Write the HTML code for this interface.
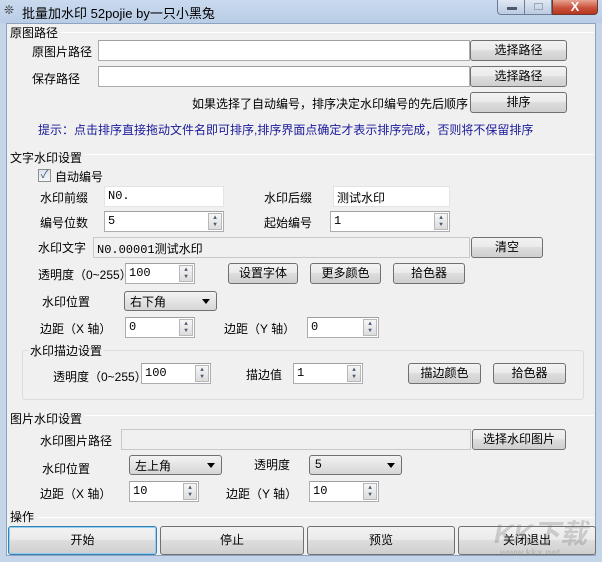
<!DOCTYPE html>
<html><head><meta charset="utf-8"><style>
*{box-sizing:border-box;margin:0;padding:0}
body{width:602px;height:562px;overflow:hidden;background:#c4d5ea;font-family:"Liberation Sans","Noto Sans CJK SC",sans-serif;font-size:12px;color:#000;position:relative}
.a{position:absolute;white-space:nowrap}
#title{left:0;top:0;width:602px;height:23px;background:linear-gradient(#c9daee,#b9cde6)}
#client{left:6px;top:23px;width:590px;height:533px;background:#f0f0f0;border:1px solid #8ea3bf}
.in{position:absolute;background:#fff;border:1px solid #abadb3;border-top-color:#a0a0a0;height:21px;font-size:12px;padding:2px 3px;font-family:"Liberation Mono","Noto Sans CJK SC",monospace}
.gr{background:#f0f0f0;border:1px solid #c8c8c8}
.btn{position:absolute;border:1px solid #707070;border-radius:3px;background:linear-gradient(#f2f2f2 0%,#ebebeb 45%,#dddddd 50%,#cfcfcf 100%);text-align:center;font-size:12px;line-height:19px;height:21px;font-weight:normal}
.sp{position:absolute;right:1px;top:1px;width:14px;height:17px;border:1px solid #b8b8b8;background:linear-gradient(#f6f6f6,#dcdcdc);font-size:6px;line-height:7px;text-align:center;color:#4a5a70}
.sel{position:absolute;border:1px solid #707070;border-radius:3px;height:20px;padding:1px 5px;background:linear-gradient(#f3f3f3,#e4e4e4 50%,#d6d6d6)}
.sel:after{content:"";position:absolute;right:6px;top:7px;border-left:4px solid transparent;border-right:4px solid transparent;border-top:5px solid #000}
.hl{position:absolute;height:1px;background:#dcdcdc;border-bottom:1px solid #fff}
</style></head><body>
<div id="title" class="a"></div>
<div class="a" style="left:4px;top:3px;font-size:12px;color:#333">❊</div>
<div class="a" style="left:22px;top:3px;font-size:13px">批量加水印 52pojie by一只小黑兔</div>
<div class="a" style="left:497px;top:0;width:28px;height:15px;border:1px solid #6d7d95;border-top:none;border-radius:0 0 0 4px;background:linear-gradient(#dfe8f3,#bccbe0)"><div style="position:absolute;left:9px;top:7px;width:10px;height:3px;background:#4b5a72"></div></div>
<div class="a" style="left:525px;top:0;width:27px;height:15px;border:1px solid #6d7d95;border-top:none;border-left:none;background:linear-gradient(#dfe8f3,#bccbe0)"><div style="position:absolute;left:9px;top:3px;width:9px;height:7px;border:1px solid #9aa8bb"></div></div>
<div class="a" style="left:552px;top:0;width:46px;height:15px;border:1px solid #6d3a32;border-top:none;border-radius:0 0 4px 0;background:linear-gradient(#e8a493,#c9533c 55%,#b8361e);color:#fff;font-weight:bold;text-align:center;font-size:13px;line-height:13px">X</div>
<div id="client" class="a"></div>

<div class="hl" style="left:8px;top:32px;width:586px"></div>
<div class="a" style="left:10px;top:24px;background:#f0f0f0;padding-right:2px">原图路径</div>
<div class="a" style="left:32px;top:43px">原图片路径</div>
<div class="in" style="left:98px;top:40px;width:372px"></div>
<div class="btn" style="left:470px;top:40px;width:97px">选择路径</div>
<div class="a" style="left:32px;top:70px">保存路径</div>
<div class="in" style="left:98px;top:66px;width:372px"></div>
<div class="btn" style="left:470px;top:66px;width:97px">选择路径</div>
<div class="a" style="left:192px;top:95px">如果选择了自动编号，排序决定水印编号的先后顺序</div>
<div class="btn" style="left:470px;top:92px;width:97px">排序</div>
<div class="a" style="left:38px;top:121px;color:#1a1a9a">提示：点击排序直接拖动文件名即可排序,排序界面点确定才表示排序完成，否则将不保留排序</div>

<div class="hl" style="left:8px;top:154px;width:586px"></div>
<div class="a" style="left:10px;top:149px;background:#f0f0f0;padding-right:2px">文字水印设置</div>
<div class="a" style="left:38px;top:169px;width:13px;height:13px;border:1px solid #8f8f8f;background:linear-gradient(#dde3ea,#f6f6f6);font-size:11px;line-height:11px;text-align:center;color:#3d5a8a">✓</div>
<div class="a" style="left:55px;top:168px">自动编号</div>
<div class="a" style="left:40px;top:189px">水印前缀</div>
<div class="in" style="left:104px;top:186px;width:120px;border-color:#e3e3e3">N0.</div>
<div class="a" style="left:264px;top:189px">水印后缀</div>
<div class="in" style="left:333px;top:186px;width:117px;border-color:#e3e3e3;font-family:'Liberation Sans','Noto Sans CJK SC',sans-serif">测试水印</div>
<div class="a" style="left:40px;top:214px">编号位数</div>
<div class="in" style="left:104px;top:211px;width:120px">5<div class="sp">▲<br>▼</div></div>
<div class="a" style="left:264px;top:214px">起始编号</div>
<div class="in" style="left:330px;top:211px;width:120px">1<div class="sp">▲<br>▼</div></div>
<div class="a" style="left:38px;top:239px">水印文字</div>
<div class="in gr" style="left:93px;top:237px;width:377px">N0.00001<span style="font-family:'Noto Sans CJK SC',sans-serif">测试水印</span></div>
<div class="btn" style="left:471px;top:237px;width:72px">清空</div>
<div class="a" style="left:38px;top:266px">透明度（0~255）</div>
<div class="in" style="left:125px;top:263px;width:70px">100<div class="sp">▲<br>▼</div></div>
<div class="btn" style="left:228px;top:263px;width:70px">设置字体</div>
<div class="btn" style="left:310px;top:263px;width:71px">更多颜色</div>
<div class="btn" style="left:393px;top:263px;width:72px">拾色器</div>
<div class="a" style="left:42px;top:293px">水印位置</div>
<div class="sel" style="left:124px;top:291px;width:93px">右下角</div>
<div class="a" style="left:40px;top:320px">边距（X 轴）</div>
<div class="in" style="left:125px;top:317px;width:70px">0<div class="sp">▲<br>▼</div></div>
<div class="a" style="left:224px;top:320px">边距（Y 轴）</div>
<div class="in" style="left:307px;top:317px;width:72px">0<div class="sp">▲<br>▼</div></div>
<div class="a" style="left:22px;top:350px;width:562px;height:50px;border:1px solid #dcdcdc;border-radius:3px"></div>
<div class="a" style="left:28px;top:342px;background:#f0f0f0;padding:0 2px">水印描边设置</div>
<div class="a" style="left:53px;top:368px">透明度（0~255）</div>
<div class="in" style="left:141px;top:363px;width:70px">100<div class="sp">▲<br>▼</div></div>
<div class="a" style="left:246px;top:366px">描边值</div>
<div class="in" style="left:293px;top:363px;width:70px">1<div class="sp">▲<br>▼</div></div>
<div class="btn" style="left:408px;top:363px;width:73px">描边颜色</div>
<div class="btn" style="left:493px;top:363px;width:73px">拾色器</div>

<div class="hl" style="left:8px;top:415px;width:586px"></div>
<div class="a" style="left:10px;top:410px;background:#f0f0f0;padding-right:2px">图片水印设置</div>
<div class="a" style="left:40px;top:432px">水印图片路径</div>
<div class="in gr" style="left:121px;top:429px;width:350px"></div>
<div class="btn" style="left:472px;top:429px;width:94px">选择水印图片</div>
<div class="a" style="left:42px;top:460px">水印位置</div>
<div class="sel" style="left:129px;top:455px;width:93px">左上角</div>
<div class="a" style="left:254px;top:456px">透明度</div>
<div class="sel" style="left:309px;top:455px;width:93px">5</div>
<div class="a" style="left:40px;top:485px">边距（X 轴）</div>
<div class="in" style="left:129px;top:481px;width:70px">10<div class="sp">▲<br>▼</div></div>
<div class="a" style="left:226px;top:485px">边距（Y 轴）</div>
<div class="in" style="left:309px;top:481px;width:70px">10<div class="sp">▲<br>▼</div></div>

<div class="hl" style="left:8px;top:517px;width:586px"></div>
<div class="a" style="left:10px;top:508px;background:#f0f0f0;padding-right:2px">操作</div>
<div class="btn" style="left:8px;top:526px;width:149px;height:29px;line-height:27px;border-color:#3c7fb1;box-shadow:inset 0 0 0 1px #8fd0f2">开始</div>
<div class="btn" style="left:160px;top:526px;width:144px;height:29px;line-height:27px">停止</div>
<div class="btn" style="left:307px;top:526px;width:148px;height:29px;line-height:27px">预览</div>
<div class="btn" style="left:458px;top:526px;width:138px;height:29px;line-height:27px">关闭退出</div>
<div class="a" style="left:494px;top:512px;font-size:27px;font-weight:bold;color:rgba(120,120,120,0.3);font-style:italic">KK下载</div>
<div class="a" style="left:500px;top:548px;font-size:10px;font-weight:bold;color:rgba(140,140,140,0.35)">www.kkx.net</div>
</body></html>
